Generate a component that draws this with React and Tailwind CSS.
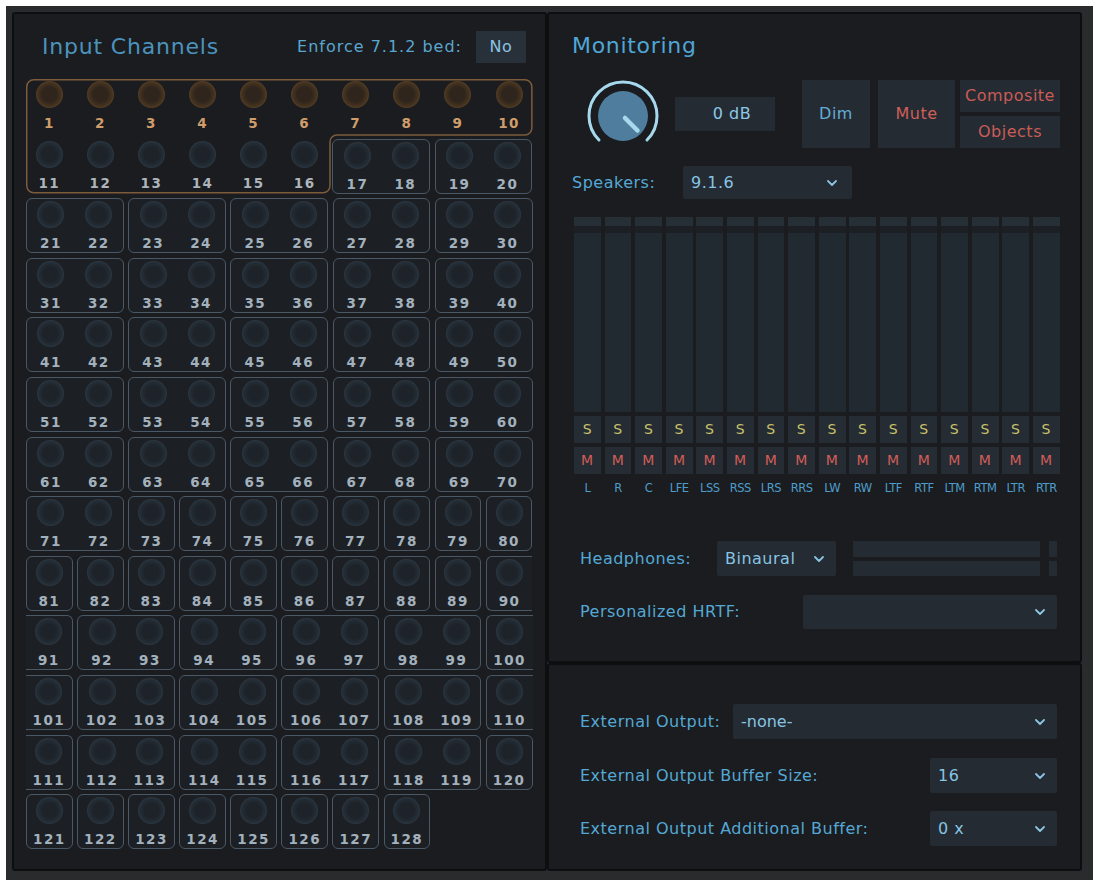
import React from 'react';

const SPEAKERS = ['L', 'R', 'C', 'LFE', 'LSS', 'RSS', 'LRS', 'RRS', 'LW', 'RW', 'LTF', 'RTF', 'LTM', 'RTM', 'LTR', 'RTR'];

const pairs = (from, n) => Array.from({ length: n }, (_, i) => ({ start: from + i * 2, count: 2 }));
const singles = (from, n) => Array.from({ length: n }, (_, i) => ({ start: from + i, count: 1 }));

// rows below the 7.1.2 bed block; "open" marks a group that wraps onto the next row
const ROWS = [
    pairs(21, 5),
    pairs(31, 5),
    pairs(41, 5),
    pairs(51, 5),
    pairs(61, 5),
    [...pairs(71, 1), ...singles(73, 8)],
    [...singles(81, 9), { start: 90, count: 1, open: 'r' }],
    [{ start: 91, count: 1, open: 'l' }, ...pairs(92, 4), { start: 100, count: 1, open: 'r' }],
    [{ start: 101, count: 1, open: 'l' }, ...pairs(102, 4), { start: 110, count: 1, open: 'r' }],
    [{ start: 111, count: 1, open: 'l' }, ...pairs(112, 4), { start: 120, count: 1 }],
    singles(121, 8),
];

function Channel({ n, bed, numColor, className = '' }) {
    return (
        <div className={`flex flex-col items-center pt-[2px] ${className}`}>
            <div
                className={
                    bed
                        ? 'w-[27px] h-[27px] rounded-full bg-[radial-gradient(circle,#2f251d_38%,#45331f_62%,#6e4f32_84%,#3d2e21_100%)]'
                        : 'w-[27px] h-[27px] rounded-full bg-[radial-gradient(circle,#1d2329_38%,#242d36_62%,#394855_84%,#242b32_100%)]'
                }
            />
            <span className={`mt-[8px] text-[13.5px] font-bold leading-[14px] tracking-[1.5px] ${numColor}`}>{n}</span>
        </div>
    );
}

function Group({ start, count, open }) {
    const w = count === 2 ? 'w-[97.8px]' : 'w-[46.7px]';
    let edge = 'border-[1.5px] rounded-[6px]';
    if (open === 'r') edge = 'border-y-[1.5px] border-l-[1.5px] rounded-l-[6px]';
    if (open === 'l') edge = 'border-y-[1.5px] border-r-[1.5px] rounded-r-[6px]';
    return (
        <div className={`${w} h-[55px] flex border-[#4a5866] bg-[#1c2025] ${edge}`}>
            {Array.from({ length: count }, (_, i) => (
                <Channel key={i} n={start + i} numColor="text-[#a3b1bd]" className="flex-1" />
            ))}
        </div>
    );
}

function BedBlock() {
    return (
        <div className="relative flex flex-col gap-y-[4.6px]">
            {/* outline around the bed channels 1-16 */}
            <svg className="absolute left-0 top-0 pointer-events-none" width="507" height="115" viewBox="0 0 507 115">
                <path
                    d="M7.75 0.75 H498.85 A7 7 0 0 1 505.85 7.75 V49 A7 7 0 0 1 498.85 56 H311 A7 7 0 0 0 304 63 V106.85 A7 7 0 0 1 297 113.85 H7.75 A7 7 0 0 1 0.75 106.85 V7.75 A7 7 0 0 1 7.75 0.75 Z"
                    fill="none"
                    stroke="#7d5b3b"
                    strokeWidth="1.5"
                />
            </svg>
            <div className="flex gap-x-[4.4px] h-[55px]">
                {Array.from({ length: 10 }, (_, i) => (
                    <Channel key={i} n={i + 1} bed numColor="text-[#cf9d6b]" className="w-[46.7px]" />
                ))}
            </div>
            <div className="flex gap-x-[4.4px] h-[55px]">
                {Array.from({ length: 6 }, (_, i) => (
                    <Channel key={i} n={i + 11} numColor="text-[#adb4bb]" className="w-[46.7px]" />
                ))}
                <Group start={17} count={2} />
                <Group start={19} count={2} />
            </div>
        </div>
    );
}

const Chevron = () => (
    <svg width="10" height="6" viewBox="0 0 10 6" className="shrink-0">
        <path d="M1 1l4 4 4-4" fill="none" stroke="#8cc4e4" strokeWidth="1.8" strokeLinecap="round" strokeLinejoin="round" />
    </svg>
);

function Select({ value, className = '' }) {
    return (
        <div className={`flex items-center justify-between bg-[#252b32] rounded-[2px] pl-[8px] pr-[12px] text-[#86c4e4] ${className}`}>
            <span>{value}</span>
            <Chevron />
        </div>
    );
}

function Knob() {
    return (
        <svg width="76" height="76" viewBox="0 0 76 76" className="shrink-0">
            <path d="M14 62 A34 34 0 1 1 62 62" fill="none" stroke="#a6d9ee" strokeWidth="3" strokeLinecap="round" />
            <circle cx="38" cy="38" r="25" fill="#4f7d9e" />
            <line x1="40" y1="40" x2="52.5" y2="52.5" stroke="#a6d9ee" strokeWidth="4.5" strokeLinecap="round" />
        </svg>
    );
}

function Meters() {
    return (
        <div className="mt-[18px] ml-[25px] flex gap-x-[3.8px]">
            {SPEAKERS.map(s => (
                <div key={s} className="w-[26.8px] flex flex-col items-stretch">
                    <div className="h-[9px] bg-[#262e36]" />
                    <div className="h-[7px] bg-[#1c2025]" />
                    <div className="h-[179px] bg-[#222a31]" />
                    <div className="mt-[4px] h-[27px] bg-[#252c33] flex items-center justify-center text-[14px] text-[#c9c26a]">S</div>
                    <div className="mt-[4px] h-[27px] bg-[#252c33] flex items-center justify-center text-[14px] text-[#d25d58]">M</div>
                    <div className="mt-[8px] h-[14px] flex items-center justify-center text-[11.5px] tracking-[-0.5px] text-[#4e9ccb] whitespace-nowrap">{s}</div>
                </div>
            ))}
        </div>
    );
}

export default function App() {
    return (
        <div className="min-h-screen bg-white pl-[6px] pt-[6px] font-['DejaVu_Sans',sans-serif] text-[16px] tracking-[0.5px]">
            <div className="w-[1087px] h-[874px] bg-[#2a2b2d] pl-[6px] pt-[6px] pr-[11px] pb-[9px] flex">
                {/* Input channels */}
                <div className="w-[535px] border-2 border-[#0d0e10] rounded-[3px] bg-[#1a1c1f] pl-[12px]">
                    <div className="mt-[17px] w-[507px] h-[32px] flex items-center pr-[7px]">
                        <h1 className="flex-1 ml-[16px] text-[22px] leading-[26px] tracking-[0.8px] text-[#4b93be]">Input Channels</h1>
                        <span className="text-[16px] tracking-[1px] text-[#5aa6cf]">Enforce 7.1.2 bed:</span>
                        <div className="ml-[14px] w-[50px] h-[32px] bg-[#28313a] flex items-center justify-center text-[#8cc3e3]">No</div>
                    </div>
                    <div className="mt-[16px] flex flex-col gap-y-[4.6px]">
                        <BedBlock />
                        {ROWS.map((row, r) => (
                            <div key={r} className="flex gap-x-[4.4px]">
                                {row.map(g => (
                                    <Group key={g.start} {...g} />
                                ))}
                            </div>
                        ))}
                    </div>
                </div>

                <div className="flex-1 flex flex-col">
                    {/* Monitoring */}
                    <div className="h-[651px] border-2 border-[#0d0e10] rounded-[3px] bg-[#1a1c1f] flex flex-col">
                        <h2 className="mt-[19px] ml-[23px] text-[22px] leading-[26px] tracking-[0.7px] text-[#4fa6d6]">Monitoring</h2>
                        <div className="mt-[19px] ml-[36px] flex items-start">
                            <Knob />
                            <div className="ml-[14px] mt-[19px] w-[100px] h-[34px] bg-[#252b32] flex items-center justify-center pl-[14px] text-[#8cc8e8]">0 dB</div>
                            <div className="ml-[27px] mt-[2px] w-[68px] h-[68px] bg-[#252b32] flex items-center justify-center text-[#62acd6]">Dim</div>
                            <div className="ml-[8px] mt-[2px] w-[77px] h-[68px] bg-[#252b32] flex items-center justify-center text-[#cf5f59]">Mute</div>
                            <div className="ml-[5px] mt-[2px] w-[100px] flex flex-col gap-[4px]">
                                <div className="h-[32px] bg-[#252b32] flex items-center justify-center text-[#c95c57]">Composite</div>
                                <div className="h-[32px] bg-[#252b32] flex items-center justify-center text-[#c95c57]">Objects</div>
                            </div>
                        </div>
                        <div className="mt-[12px] ml-[23px] flex items-center">
                            <span className="w-[111px] text-[#55a8d5]">Speakers:</span>
                            <Select value="9.1.6" className="w-[169px] h-[33px] pr-[15px]" />
                        </div>
                        <Meters />
                        <div className="mt-[45px] ml-[31px] mr-[23px] flex items-center">
                            <span className="w-[137px] text-[#55a8d5]">Headphones:</span>
                            <Select value="Binaural" className="w-[119px] h-[35px]" />
                            <div className="ml-[17px] flex-1 flex flex-col gap-[4px]">
                                <div className="h-[15.5px] bg-[#252b32]" />
                                <div className="h-[15.5px] bg-[#252b32]" />
                            </div>
                            <div className="ml-[9px] w-[8px] flex flex-col gap-[4px]">
                                <div className="h-[15.5px] bg-[#252b32]" />
                                <div className="h-[15.5px] bg-[#252b32]" />
                            </div>
                        </div>
                        <div className="mt-[19px] ml-[31px] mr-[23px] flex items-center">
                            <span className="w-[223px] text-[#55a8d5]">Personalized HRTF:</span>
                            <Select value="" className="flex-1 h-[34px]" />
                        </div>
                    </div>

                    {/* External output */}
                    <div className="flex-1 border-2 border-[#0d0e10] rounded-[3px] bg-[#1a1c1f] flex flex-col pl-[31px] pr-[23px]">
                        <div className="mt-[39px] flex items-center">
                            <span className="w-[153px] text-[#55a8d5]">External Output:</span>
                            <Select value="-none-" className="flex-1 h-[35px] tracking-normal" />
                        </div>
                        <div className="mt-[19px] flex items-center justify-between">
                            <span className="text-[#55a8d5]">External Output Buffer Size:</span>
                            <Select value="16" className="w-[127px] h-[35px]" />
                        </div>
                        <div className="mt-[18px] flex items-center justify-between">
                            <span className="text-[#55a8d5]">External Output Additional Buffer:</span>
                            <Select value="0 x" className="w-[127px] h-[35px]" />
                        </div>
                    </div>
                </div>
            </div>
        </div>
    );
}
